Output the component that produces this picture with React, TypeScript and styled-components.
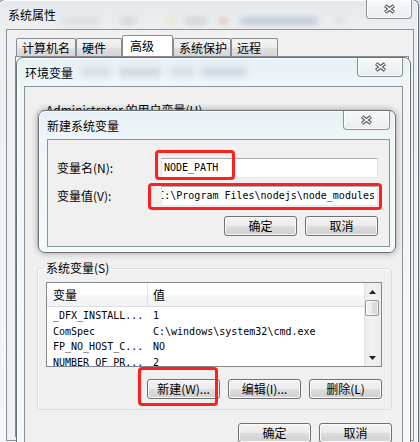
import React from "react";
import styled, { createGlobalStyle } from "styled-components";

// fonts
const UI_FONT = `"Noto Sans CJK SC", "Noto Sans", sans-serif`;
const DATA_FONT = `"DejaVu Sans Mono", "Liberation Mono", monospace`;

const GlobalStyle = createGlobalStyle`
  html, body {
    margin: 0;
    padding: 0;
    background: #cfdbe3;
  }
  body {
    width: 420px;
    height: 442px;
    overflow: hidden;
    font-family: ${UI_FONT};
    font-size: 12px;
    color: #000;
  }
  * { box-sizing: border-box; }
`;

// desktop: the windows sit on it at their own places
const Stage = styled.main`
  position: relative;
  width: 420px;
  height: 442px;
  overflow: hidden;
  background: #cfdbe3;
`;

const Frame = styled.section<{
  $x: number; $y: number; $w: number; $h: number;
  $tone: "gray" | "glass"; $bottomRound?: boolean; $shade?: boolean;
}>`
  position: absolute;
  left: ${p => p.$x}px;
  top: ${p => p.$y}px;
  width: ${p => p.$w}px;
  height: ${p => p.$h}px;
  display: flex;
  flex-direction: column;
  border: 1px solid #6a7075;
  border-radius: ${p => (p.$bottomRound ? "7px" : "7px 7px 0 0")};
  background: ${p =>
    p.$tone === "gray"
      ? "linear-gradient(180deg, #e4e8eb 0px, #eceff1 28px, #f4f6f7 100%)"
      : "linear-gradient(180deg, #e6eff3 0px, #eef6f9 28px, #f3fafc 100%)"};
  box-shadow: inset 0 0 0 1px rgba(255, 255, 255, 0.85)
    ${p => (p.$shade ? ", 0 0 7px rgba(0, 0, 0, 0.35)" : "")};
`;

const TitleBar = styled.header<{ $h: number; $pl: number }>`
  flex: none;
  height: ${p => p.$h}px;
  display: flex;
  align-items: flex-start;
  padding-left: ${p => p.$pl}px;
`;

const Title = styled.span<{ $top: number }>`
  flex: none;
  margin-top: ${p => p.$top}px;
  font: 12px/14px ${UI_FONT};
  color: #000;
  white-space: nowrap;
  text-shadow: 0 0 5px rgba(255, 255, 255, 0.95);
`;

const Blurs = styled.div<{ $pt: number }>`
  flex: 1;
  min-width: 0;
  align-self: stretch;
  display: flex;
  align-items: flex-start;
  padding-top: ${p => p.$pt}px;
  overflow: hidden;
`;

const Blob = styled.span<{ $gap: number; $w: number; $c: string; $h: number }>`
  flex: none;
  margin-left: ${p => p.$gap}px;
  width: ${p => p.$w}px;
  height: ${p => p.$h}px;
  border-radius: 4px;
  background: ${p => p.$c};
  filter: blur(3px);
  opacity: 0.55;
`;

const CloseBtn = styled.div<{ $w: number; $h: number; $mr: number }>`
  flex: none;
  width: ${p => p.$w}px;
  height: ${p => p.$h}px;
  margin-right: ${p => p.$mr}px;
  display: flex;
  align-items: center;
  justify-content: center;
  border: 1px solid #8c9298;
  border-top: none;
  border-radius: 0 0 4px 4px;
  background: linear-gradient(180deg, #f6f9fa, #e8eef1);
  box-shadow: inset 0 0 0 1px rgba(255, 255, 255, 0.7);
`;

const Client = styled.div<{ $m: string }>`
  flex: 1;
  min-height: 0;
  margin: ${p => p.$m};
  display: flex;
  flex-direction: column;
  border: 1px solid #8b939a;
  background: #f0f0f0;
  overflow: hidden;
`;

// tabs of 系统属性
const TabStrip = styled.div`
  flex: none;
  height: 21px;
  margin-top: 5px;
  padding-left: 9px;
  display: flex;
  align-items: flex-end;
`;

const Tab = styled.div<{ $w: number; $active?: boolean }>`
  flex: none;
  width: ${p => p.$w}px;
  height: ${p => (p.$active ? 21 : 18)}px;
  display: flex;
  align-items: center;
  padding-left: ${p => (p.$active ? 7 : 5)}px;
  border: 1px solid #898c95;
  border-bottom: none;
  border-radius: 2px 2px 0 0;
  background: ${p =>
    p.$active
      ? "#ffffff"
      : "linear-gradient(180deg, #f4f4f4 0%, #ececec 50%, #e0e0e0 51%, #d6d6d6 100%)"};
  font: 12px/14px ${UI_FONT};
  white-space: nowrap;
`;

const TabPage = styled.div`
  flex: 1;
  margin: 0 4px 3px 8px;
  border: 1px solid #898c95;
  background: #fbfbfb;
`;

// env window body
const EnvBody = styled.div`
  display: flex;
  flex-direction: column;
  padding: 16px 10px 0 12px;
`;

const Group = styled.fieldset<{ $h?: number; $mt?: number }>`
  margin: ${p => p.$mt ?? 0}px 0 0 0;
  min-width: 0;
  height: ${p => (p.$h ? `${p.$h}px` : "auto")};
  padding: 7px 9px 10px 8px;
  border: 1px solid #d5dfe5;
  border-radius: 3px;
  box-shadow: inset 1px 1px 0 #ffffff;
`;

const Legend = styled.legend`
  margin-left: -2px;
  padding: 0 2px;
  font: 12px/14px ${UI_FONT};
  white-space: nowrap;
`;

const ListBox = styled.div`
  height: 85px;
  display: flex;
  border: 1px solid #828790;
  background: #ffffff;
`;

const ListBody = styled.div`
  flex: 1;
  min-width: 0;
  display: flex;
  flex-direction: column;
  overflow: hidden;
`;

const HeaderRow = styled.div`
  flex: none;
  height: 24px;
  display: grid;
  grid-template-columns: 101px 1fr;
  border-bottom: 1px solid #dcdde0;
  background: linear-gradient(180deg, #ffffff 0%, #ffffff 50%, #f6f7f8 51%, #f2f3f5 100%);
`;

const HeaderCell = styled.div<{ $first?: boolean }>`
  padding-left: ${p => (p.$first ? 6 : 5)}px;
  border-right: ${p => (p.$first ? "1px solid #e3e4e7" : "none")};
  font: 12px/23px ${UI_FONT};
  white-space: nowrap;
`;

const Rows = styled.div`
  padding-top: 1px;
`;

const Row = styled.div`
  height: 15.5px;
  display: grid;
  grid-template-columns: 101px 1fr;
  font: 10px/15.5px ${DATA_FONT};
`;

const Cell = styled.span<{ $first?: boolean }>`
  padding-left: ${p => (p.$first ? 6 : 5)}px;
  white-space: nowrap;
  overflow: hidden;
`;

const ScrollBar = styled.div`
  flex: none;
  width: 17px;
  display: flex;
  flex-direction: column;
  background: linear-gradient(90deg, #e2e2e2 0, #ededed 2px, #f1f1f1 50%, #ebebeb 100%);
`;

const ArrowBox = styled.div`
  flex: none;
  height: 17px;
  display: flex;
  align-items: center;
  justify-content: center;
`;

const Thumb = styled.div`
  flex: none;
  height: 16px;
  margin: 0 2px 0 1px;
  border: 1px solid #979797;
  border-radius: 2px;
  background: linear-gradient(90deg, #f6f6f6 0%, #ececec 45%, #dedede 55%, #d6d6d6 100%);
  box-shadow: inset 0 0 0 1px rgba(255, 255, 255, 0.6);
`;

const Track = styled.div`
  flex: 1;
`;

const ButtonRow = styled.div<{ $mt: number }>`
  flex: none;
  margin-top: ${p => p.$mt}px;
  display: flex;
  justify-content: flex-end;
  gap: 8px;
`;

const Button = styled.button`
  flex: none;
  width: 73px;
  height: 20px;
  padding: 0;
  display: flex;
  align-items: center;
  justify-content: center;
  border: 1px solid #707070;
  border-radius: 3px;
  background: linear-gradient(180deg, #f3f3f3 0%, #ebebeb 50%, #dddddd 51%, #d0d0d0 100%);
  box-shadow: inset 0 0 0 1px #fbfbfb;
  font: 12px/14px ${UI_FONT};
  color: #000;
  white-space: nowrap;
`;

// new variable dialog body
const DialogBody = styled.div`
  display: flex;
  flex-direction: column;
  padding: 18px 11px 0 9px;
`;

const FormRow = styled.div<{ $mt?: number }>`
  height: 20px;
  margin-top: ${p => p.$mt ?? 0}px;
  display: flex;
  align-items: center;
`;

const Label = styled.span`
  flex: none;
  width: 104px;
  font: 12px/14px ${UI_FONT};
  white-space: nowrap;
`;

const Field = styled.div<{ $end?: boolean }>`
  flex: 1;
  min-width: 0;
  height: 20px;
  display: flex;
  align-items: center;
  justify-content: ${p => (p.$end ? "flex-end" : "flex-start")};
  padding: 0 2px;
  border: 1px solid;
  border-color: #abadb3 #dbdfe6 #e3e9ef #e2e3ea;
  background: #ffffff;
  overflow: hidden;
  font: 10px/14px ${DATA_FONT};
  white-space: nowrap;
`;

const FieldText = styled.span`
  flex: none;
`;

// red annotation boxes drawn over the screenshot
const Mark = styled.div<{ $x: number; $y: number; $w: number; $h: number }>`
  position: absolute;
  left: ${p => p.$x}px;
  top: ${p => p.$y}px;
  width: ${p => p.$w}px;
  height: ${p => p.$h}px;
  border: 3px solid #ff1f1f;
  border-radius: 4px;
  pointer-events: none;
`;

const CloseGlyph = () => (
  <svg width="13" height="10" viewBox="0 0 13 10">
    <path d="M2.2 1.6 L10.8 8.4 M10.8 1.6 L2.2 8.4" stroke="#4a5056" strokeWidth="3.6" />
    <path d="M2.6 2 L10.4 8 M10.4 2 L2.6 8" stroke="#ffffff" strokeWidth="1.5" />
  </svg>
);

const Arrow = ({ down }: { down?: boolean }) => (
  <svg width="7" height="4" viewBox="0 0 7 4">
    <path d={down ? "M0 0H7L3.5 4Z" : "M0 4H7L3.5 0Z"} fill="#202020" />
  </svg>
);

type BlobSpec = { gap: number; w: number; c: string };

const outerBlurs: BlobSpec[] = [
  { gap: 6, w: 38, c: "#c2cad4" },
  { gap: 20, w: 16, c: "#a9b7c9" },
  { gap: 32, w: 6, c: "#e6d36c" },
  { gap: 10, w: 24, c: "#aab5c4" },
  { gap: 12, w: 7, c: "#e06a6a" },
  { gap: 13, w: 78, c: "#8e9dbb" },
  { gap: 17, w: 8, c: "#b3cbe2" },
];

const envBlurs: BlobSpec[] = [
  { gap: 8, w: 30, c: "#c4cad3" },
  { gap: 8, w: 42, c: "#b8c0cc" },
  { gap: 10, w: 24, c: "#c2c9d3" },
  { gap: 6, w: 46, c: "#b2bdcd" },
];

const tabs = [
  { label: "计算机名", w: 60 },
  { label: "硬件", w: 46 },
  { label: "高级", w: 51, active: true },
  { label: "系统保护", w: 58 },
  { label: "远程", w: 47 },
];

const sysVars = [
  ["_DFX_INSTALL...", "1"],
  ["ComSpec", "C:\\windows\\system32\\cmd.exe"],
  ["FP_NO_HOST_C...", "NO"],
  ["NUMBER_OF_PR...", "2"],
];

const renderBlurs = (list: BlobSpec[], h: number) =>
  list.map((b, i) => <Blob key={i} $gap={b.gap} $w={b.w} $c={b.c} $h={h} />);

export default function App() {
  return (
    <>
      <GlobalStyle />
      <Stage>
        {/* 系统属性 */}
        <Frame $x={-2} $y={-1} $w={421} $h={449} $tone="gray">
          <TitleBar $h={29} $pl={9}>
            <Title $top={8}>系统属性</Title>
            <Blurs $pt={18}>{renderBlurs(outerBlurs, 6)}</Blurs>
            <CloseBtn $w={46} $h={19} $mr={6}>
              <CloseGlyph />
            </CloseBtn>
          </TitleBar>
          <Client $m="0 4px 6px 7px">
            <TabStrip>
              {tabs.map(t => (
                <Tab key={t.label} $w={t.w} $active={t.active}>
                  {t.label}
                </Tab>
              ))}
            </TabStrip>
            <TabPage />
          </Client>
        </Frame>

        {/* 环境变量 */}
        <Frame $x={16} $y={57} $w={395} $h={400} $tone="glass">
          <TitleBar $h={28} $pl={8}>
            <Title $top={8}>环境变量</Title>
            <Blurs $pt={10}>{renderBlurs(envBlurs, 8)}</Blurs>
            <CloseBtn $w={46} $h={19} $mr={7}>
              <CloseGlyph />
            </CloseBtn>
          </TitleBar>
          <Client $m="0 7px">
            <EnvBody>
              <Group $h={147}>
                <Legend>Administrator 的用户变量(U)</Legend>
              </Group>
              <Group $mt={11}>
                <Legend>系统变量(S)</Legend>
                <ListBox>
                  <ListBody>
                    <HeaderRow>
                      <HeaderCell $first>变量</HeaderCell>
                      <HeaderCell>值</HeaderCell>
                    </HeaderRow>
                    <Rows>
                      {sysVars.map(([name, value]) => (
                        <Row key={name}>
                          <Cell $first>{name}</Cell>
                          <Cell>{value}</Cell>
                        </Row>
                      ))}
                    </Rows>
                  </ListBody>
                  <ScrollBar>
                    <ArrowBox>
                      <Arrow />
                    </ArrowBox>
                    <Thumb />
                    <Track />
                    <ArrowBox>
                      <Arrow down />
                    </ArrowBox>
                  </ScrollBar>
                </ListBox>
                <ButtonRow $mt={12}>
                  <Button>新建(W)...</Button>
                  <Button>编辑(I)...</Button>
                  <Button>删除(L)</Button>
                </ButtonRow>
              </Group>
              <ButtonRow $mt={13}>
                <Button>确定</Button>
                <Button>取消</Button>
              </ButtonRow>
            </EnvBody>
          </Client>
        </Frame>

        {/* 新建系统变量 */}
        <Frame $x={38} $y={110} $w={358} $h={143} $tone="glass" $bottomRound $shade>
          <TitleBar $h={28} $pl={8}>
            <Title $top={8}>新建系统变量</Title>
            <Blurs $pt={10} />
            <CloseBtn $w={47} $h={19} $mr={5}>
              <CloseGlyph />
            </CloseBtn>
          </TitleBar>
          <Client $m="0 5px 5px 8px">
            <DialogBody>
              <FormRow>
                <Label>变量名(N):</Label>
                <Field>
                  <FieldText>NODE_PATH</FieldText>
                </Field>
              </FormRow>
              <FormRow $mt={8}>
                <Label>变量值(V):</Label>
                <Field $end>
                  <FieldText>C:\Program Files\nodejs\node_modules</FieldText>
                </Field>
              </FormRow>
              <ButtonRow $mt={10}>
                <Button>确定</Button>
                <Button>取消</Button>
              </ButtonRow>
            </DialogBody>
          </Client>
        </Frame>

        <Mark $x={155} $y={150} $w={80} $h={30} />
        <Mark $x={148} $y={183} $w={234} $h={27} />
        <Mark $x={138} $y={367} $w={80} $h={39} />
      </Stage>
    </>
  );
}
